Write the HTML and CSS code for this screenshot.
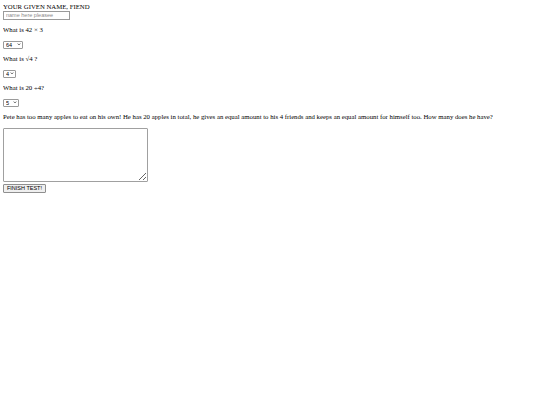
FILE: index.html
```html
<!DOCTYPE html>
<html>
<head>
<meta charset="utf-8">
<link rel="stylesheet" href="styles.css">
</head>
<body class="page">
<form class="test">
  <label class="name-label" for="name">YOUR GIVEN NAME, FIEND</label><br>
  <input class="name-input" id="name" type="text" placeholder="name here pleasee">
  <p class="question">What is 42 × 3</p>
  <span class="select-wrap"><select class="answer answer-a"><option>64</option><option>126</option></select><svg class="chev" viewBox="0 0 10 6"><path d="M1.5 1.5 L5 4.5 L8.5 1.5" fill="none" stroke="#222" stroke-width="1.6"/></svg></span>
  <p class="question">What is √4 ?</p>
  <span class="select-wrap"><select class="answer answer-b"><option>4</option><option>2</option></select><svg class="chev" viewBox="0 0 10 6"><path d="M1.5 1.5 L5 4.5 L8.5 1.5" fill="none" stroke="#222" stroke-width="1.6"/></svg></span>
  <p class="question">What is 20 ÷4?</p>
  <span class="select-wrap"><select class="answer answer-c"><option>5</option><option>4</option></select><svg class="chev" viewBox="0 0 10 6"><path d="M1.5 1.5 L5 4.5 L8.5 1.5" fill="none" stroke="#222" stroke-width="1.6"/></svg></span>
  <p class="question">Pete has too many apples to eat on his own! He has 20 apples in total, he gives an equal amount to his 4 friends and keeps an equal amount for himself too. How many does he have?</p>
  <textarea class="answer-text"></textarea>
  <div class="actions"><button class="finish" type="button">FINISH TEST!</button></div>
</form>
</body>
</html>
```
FILE: styles.css
```css
html { background: #fff; }
.page {
  margin: 3px;
  font-family: "Liberation Serif", "Times New Roman", serif;
  font-size: 6.75px;
  line-height: 7.5px;
  color: #000;
}
.test { margin: 0; }
.name-label { display: inline-block; }
.name-input {
  display: block;
  box-sizing: border-box;
  width: 67px;
  height: 9px;
  margin: 0;
  padding: 0 2px;
  border: 1px solid #9a9a9a;
  font-family: "Liberation Sans", Arial, sans-serif;
  font-size: 5.5px;
}
.name-input::placeholder { color: #8a8a8a; }
.question { margin: 6.75px 0; }
.select-wrap {
  position: relative;
  display: block;
  width: max-content;
  height: 8px;
}
.answer {
  appearance: none;
  -webkit-appearance: none;
  display: block;
  box-sizing: border-box;
  height: 8px;
  margin: 0;
  padding: 0 0 0 2px;
  border: 1px solid #9a9a9a;
  border-radius: 1px;
  background: #fff;
  color: #000;
  font-family: "Liberation Sans", Arial, sans-serif;
  font-size: 5.5px;
  line-height: 6px;
}
.answer-a { width: 20px; }
.answer-b { width: 13px; }
.answer-c { width: 16px; }
.chev {
  position: absolute;
  right: 2px;
  top: 2.5px;
  width: 4px;
  height: 2.5px;
  pointer-events: none;
}
.answer-text {
  display: block;
  box-sizing: border-box;
  width: 145px;
  height: 54px;
  margin: 0;
  border: 1px solid #a0a0a0;
  border-radius: 1px;
}
.actions { margin-top: 2px; line-height: 0; }
.finish {
  box-sizing: border-box;
  height: 9px;
  width: 43px;
  margin: 0;
  padding: 0;
  border: 1px solid #8f8f8f;
  border-radius: 1px;
  background: #efefef;
  font-family: "Liberation Sans", Arial, sans-serif;
  font-size: 5.5px;
  line-height: 7px;
  color: #000;
}
```
